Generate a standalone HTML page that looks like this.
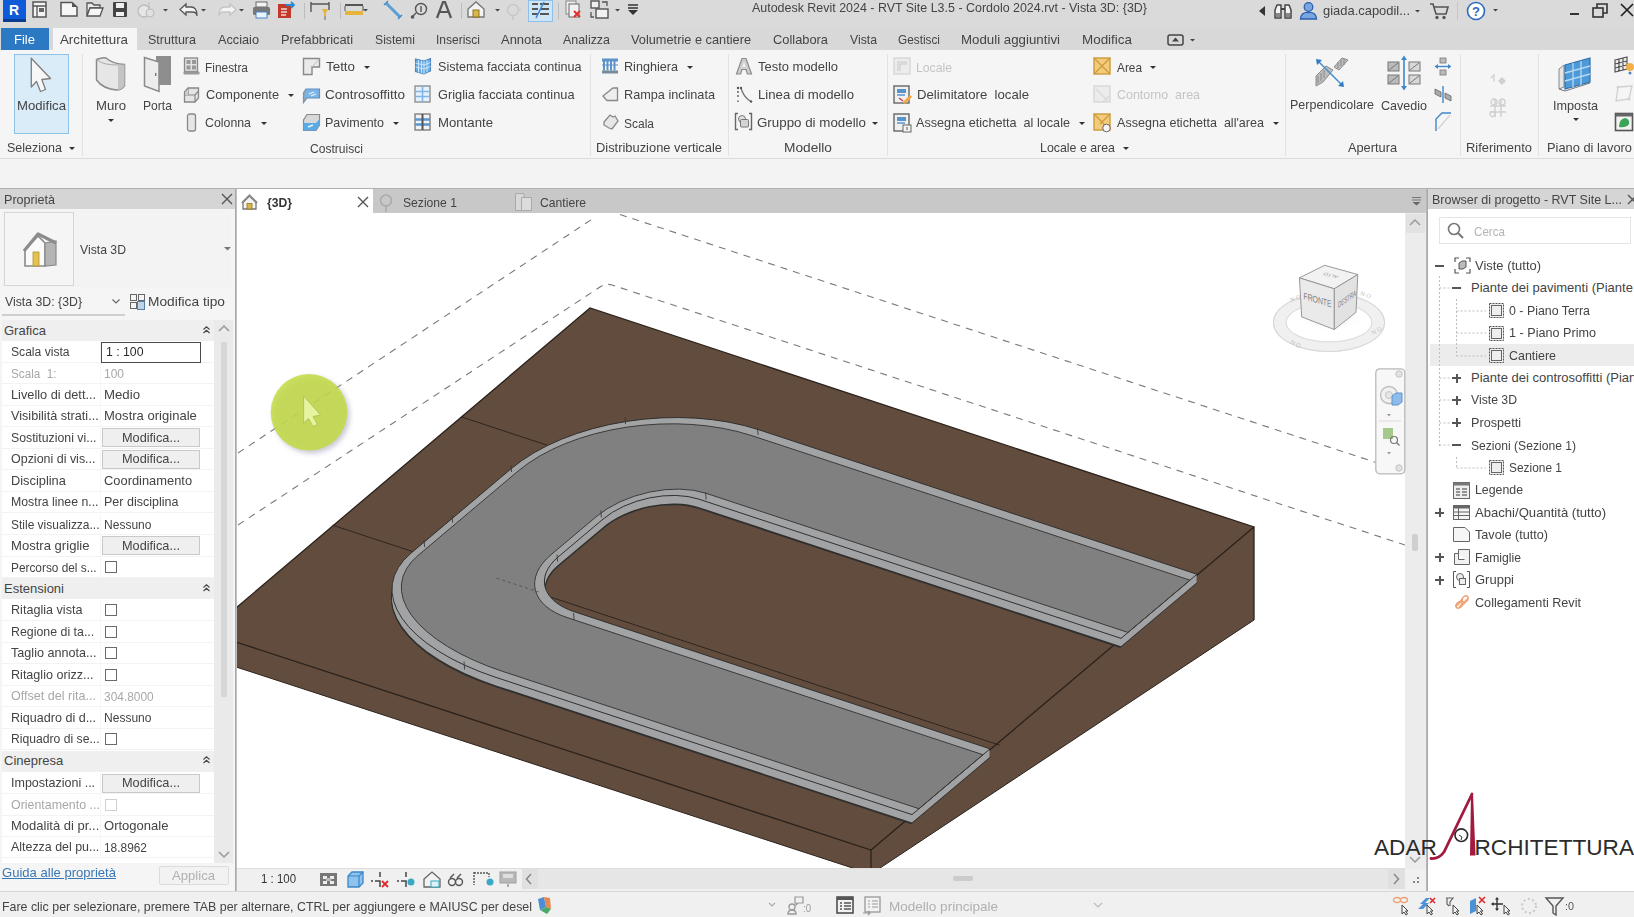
<!DOCTYPE html>
<html><head><meta charset="utf-8"><style>
html,body{margin:0;padding:0;width:1634px;height:917px;overflow:hidden;background:#f0f0f0;position:relative}
body{font-family:"Liberation Sans", sans-serif}
.t{position:absolute;white-space:pre;line-height:1.15;font-family:"Liberation Sans", sans-serif}
svg{overflow:visible}
</style></head><body>
<div style="position:absolute;left:0px;top:0px;width:1634px;height:28px;background:#dadada;"></div><div style="position:absolute;left:0px;top:28px;width:1634px;height:22px;background:#d8d8d8;"></div><div style="position:absolute;left:0px;top:50px;width:1634px;height:108px;background:#f5f5f5;"></div><div style="position:absolute;left:0px;top:158px;width:1634px;height:1px;background:#dcdcdc;"></div><div style="position:absolute;left:0px;top:159px;width:1634px;height:30px;background:#f3f3f3;"></div><div style="position:absolute;left:0px;top:188px;width:1634px;height:1px;background:#b0b0b0;"></div><div style="position:absolute;left:0px;top:891px;width:1634px;height:26px;background:#f0f0f0;"></div><div style="position:absolute;left:0px;top:891px;width:1634px;height:1px;background:#d6d6d6;"></div><div style="position:absolute;left:1px;top:28px;width:48px;height:22px;background:#2b79c2;"></div><div style="position:absolute;left:53px;top:28px;width:84px;height:22px;background:#f5f5f5;"></div><div style="position:absolute;left:82px;top:54px;width:1px;height:102px;background:#e2e2e2;"></div><div style="position:absolute;left:590px;top:54px;width:1px;height:102px;background:#e2e2e2;"></div><div style="position:absolute;left:728px;top:54px;width:1px;height:102px;background:#e2e2e2;"></div><div style="position:absolute;left:887px;top:54px;width:1px;height:102px;background:#e2e2e2;"></div><div style="position:absolute;left:1285px;top:54px;width:1px;height:102px;background:#e2e2e2;"></div><div style="position:absolute;left:1460px;top:54px;width:1px;height:102px;background:#e2e2e2;"></div><div style="position:absolute;left:1538px;top:54px;width:1px;height:102px;background:#e2e2e2;"></div><div style="position:absolute;left:14px;top:54px;width:55px;height:80px;background:#d9ecf8;border:1px solid #8dc3ea;box-sizing:border-box"></div><svg style="position:absolute;left:69px;top:146.5px" width="6" height="3"><polygon points="0,0 6,0 3,3" fill="#333"/></svg><svg style="position:absolute;left:364px;top:65.5px" width="6" height="3"><polygon points="0,0 6,0 3,3" fill="#333"/></svg><svg style="position:absolute;left:288px;top:93.5px" width="6" height="3"><polygon points="0,0 6,0 3,3" fill="#333"/></svg><svg style="position:absolute;left:261px;top:121.5px" width="6" height="3"><polygon points="0,0 6,0 3,3" fill="#333"/></svg><svg style="position:absolute;left:393px;top:121.5px" width="6" height="3"><polygon points="0,0 6,0 3,3" fill="#333"/></svg><svg style="position:absolute;left:687px;top:65.5px" width="6" height="3"><polygon points="0,0 6,0 3,3" fill="#333"/></svg><svg style="position:absolute;left:872px;top:121.5px" width="6" height="3"><polygon points="0,0 6,0 3,3" fill="#333"/></svg><svg style="position:absolute;left:1079px;top:121.5px" width="6" height="3"><polygon points="0,0 6,0 3,3" fill="#333"/></svg><svg style="position:absolute;left:1150px;top:65.5px" width="6" height="3"><polygon points="0,0 6,0 3,3" fill="#333"/></svg><svg style="position:absolute;left:1273px;top:121.5px" width="6" height="3"><polygon points="0,0 6,0 3,3" fill="#333"/></svg><svg style="position:absolute;left:1123px;top:146.5px" width="6" height="3"><polygon points="0,0 6,0 3,3" fill="#333"/></svg><svg style="position:absolute;left:108px;top:118.5px" width="6" height="3"><polygon points="0,0 6,0 3,3" fill="#333"/></svg><svg style="position:absolute;left:1573px;top:117.5px" width="6" height="3"><polygon points="0,0 6,0 3,3" fill="#333"/></svg><svg style="position:absolute;left:1414.5px;top:9.75px" width="5.0" height="2.5"><polygon points="0,0 5.0,0 2.5,2.5" fill="#444"/></svg><svg style="position:absolute;left:1492.5px;top:8.75px" width="5.0" height="2.5"><polygon points="0,0 5.0,0 2.5,2.5" fill="#444"/></svg><svg style="position:absolute;left:1189.5px;top:38.75px" width="5.0" height="2.5"><polygon points="0,0 5.0,0 2.5,2.5" fill="#444"/></svg><div style="position:absolute;left:0px;top:189px;width:236px;height:702px;background:#f5f5f5;"></div><div style="position:absolute;left:0px;top:189px;width:236px;height:20px;background:#d5d5d5;"></div><div style="position:absolute;left:235px;top:189px;width:1px;height:702px;background:#a9a9a9;"></div><svg style="position:absolute;left:221px;top:193px;" width="12" height="12" viewBox="0 0 12 12"><path d="M1,1 L11,11 M11,1 L1,11" stroke="#555" stroke-width="1.4"/></svg><div style="position:absolute;left:2px;top:210px;width:229px;height:77px;background:#f3f3f3;"></div><div style="position:absolute;left:4px;top:212px;width:70px;height:74px;background:#f5f5f5;border:1px solid #d6d6d6;box-sizing:border-box"></div><svg style="position:absolute;left:223.5px;top:247.25px" width="7.0" height="3.5"><polygon points="0,0 7.0,0 3.5,3.5" fill="#777"/></svg><svg style="position:absolute;left:21px;top:229px;" width="38" height="40" viewBox="0 0 38 40"><path d="M4,21 L17,7 L24,14 V37 H4 Z" fill="#fafafa" stroke="#8a8a8a" stroke-width="1.6"/><path d="M24,14 L35,12 V36 L24,37 Z" fill="#b4b4b4" stroke="#8a8a8a" stroke-width="1.2"/><path d="M3,22 L17,5 L35,14" fill="none" stroke="#8c8c8c" stroke-width="3.2" stroke-linejoin="round"/><rect x="12" y="23" width="6" height="14" fill="#e3c24f" stroke="#b39530" stroke-width="0.8"/></svg><svg style="position:absolute;left:112px;top:299px;" width="8" height="5" viewBox="0 0 8 5"><path d="M0.5,0.5 L4,4 L7.5,0.5" fill="none" stroke="#666" stroke-width="1.2"/></svg><div style="position:absolute;left:2px;top:314px;width:123px;height:2px;background:#cfcfcf;"></div><svg style="position:absolute;left:130px;top:294px;" width="15" height="16" viewBox="0 0 15 16"><rect x="0.5" y="0.5" width="6" height="6" fill="none" stroke="#666"/><rect x="8.5" y="0.5" width="6" height="6" fill="none" stroke="#666"/><rect x="0.5" y="8.5" width="6" height="6" fill="none" stroke="#666"/><rect x="7.5" y="7.5" width="7" height="8" fill="#bcd3ea" stroke="#5a7ea8"/></svg><div style="position:absolute;left:2px;top:320px;width:212px;height:543px;background:#ffffff;"></div><div style="position:absolute;left:2px;top:320.0px;width:212px;height:21px;background:#efefef;"></div><svg style="position:absolute;left:203px;top:325.5px;" width="7" height="8" viewBox="0 0 7 8"><path d="M0.5,3.5 L3.5,0.8 L6.5,3.5 M0.5,7 L3.5,4.3 L6.5,7" fill="none" stroke="#444" stroke-width="1.1"/></svg><div style="position:absolute;left:2px;top:578.0px;width:212px;height:21px;background:#efefef;"></div><svg style="position:absolute;left:203px;top:583.5px;" width="7" height="8" viewBox="0 0 7 8"><path d="M0.5,3.5 L3.5,0.8 L6.5,3.5 M0.5,7 L3.5,4.3 L6.5,7" fill="none" stroke="#444" stroke-width="1.1"/></svg><div style="position:absolute;left:2px;top:750.5px;width:212px;height:21px;background:#efefef;"></div><svg style="position:absolute;left:203px;top:756px;" width="7" height="8" viewBox="0 0 7 8"><path d="M0.5,3.5 L3.5,0.8 L6.5,3.5 M0.5,7 L3.5,4.3 L6.5,7" fill="none" stroke="#444" stroke-width="1.1"/></svg><div style="position:absolute;left:2px;top:361.6px;width:212px;height:1px;background:#f3f3f3;"></div><div style="position:absolute;left:100px;top:341.1px;width:1px;height:21px;background:#f6f6f6;"></div><div style="position:absolute;left:101px;top:341.5px;width:100px;height:21px;background:#ffffff;border:1.5px solid #4a4a4a;box-sizing:border-box"></div><div style="position:absolute;left:2px;top:383px;width:212px;height:1px;background:#f3f3f3;"></div><div style="position:absolute;left:100px;top:362.5px;width:1px;height:21px;background:#f6f6f6;"></div><div style="position:absolute;left:2px;top:404.5px;width:212px;height:1px;background:#f3f3f3;"></div><div style="position:absolute;left:100px;top:384.0px;width:1px;height:21px;background:#f6f6f6;"></div><div style="position:absolute;left:2px;top:426px;width:212px;height:1px;background:#f3f3f3;"></div><div style="position:absolute;left:100px;top:405.5px;width:1px;height:21px;background:#f6f6f6;"></div><div style="position:absolute;left:2px;top:447.5px;width:212px;height:1px;background:#f3f3f3;"></div><div style="position:absolute;left:100px;top:427.0px;width:1px;height:21px;background:#f6f6f6;"></div><div style="position:absolute;left:102px;top:428.0px;width:98px;height:19px;background:#efefef;border:1px solid #c9c9c9;box-sizing:border-box"></div><div style="position:absolute;left:2px;top:469px;width:212px;height:1px;background:#f3f3f3;"></div><div style="position:absolute;left:100px;top:448.5px;width:1px;height:21px;background:#f6f6f6;"></div><div style="position:absolute;left:102px;top:449.5px;width:98px;height:19px;background:#efefef;border:1px solid #c9c9c9;box-sizing:border-box"></div><div style="position:absolute;left:2px;top:490.7px;width:212px;height:1px;background:#f3f3f3;"></div><div style="position:absolute;left:100px;top:470.2px;width:1px;height:21px;background:#f6f6f6;"></div><div style="position:absolute;left:2px;top:512px;width:212px;height:1px;background:#f3f3f3;"></div><div style="position:absolute;left:100px;top:491.5px;width:1px;height:21px;background:#f6f6f6;"></div><div style="position:absolute;left:2px;top:534px;width:212px;height:1px;background:#f3f3f3;"></div><div style="position:absolute;left:100px;top:513.5px;width:1px;height:21px;background:#f6f6f6;"></div><div style="position:absolute;left:2px;top:555.5px;width:212px;height:1px;background:#f3f3f3;"></div><div style="position:absolute;left:100px;top:535.0px;width:1px;height:21px;background:#f6f6f6;"></div><div style="position:absolute;left:102px;top:536.0px;width:98px;height:19px;background:#efefef;border:1px solid #c9c9c9;box-sizing:border-box"></div><div style="position:absolute;left:2px;top:577px;width:212px;height:1px;background:#f3f3f3;"></div><div style="position:absolute;left:100px;top:556.5px;width:1px;height:21px;background:#f6f6f6;"></div><div style="position:absolute;left:105px;top:561px;width:12px;height:12px;background:transparent;border:1px solid #6a6a6a;box-sizing:border-box"></div><div style="position:absolute;left:2px;top:620px;width:212px;height:1px;background:#f3f3f3;"></div><div style="position:absolute;left:100px;top:599.5px;width:1px;height:21px;background:#f6f6f6;"></div><div style="position:absolute;left:105px;top:604px;width:12px;height:12px;background:transparent;border:1px solid #6a6a6a;box-sizing:border-box"></div><div style="position:absolute;left:2px;top:641.5px;width:212px;height:1px;background:#f3f3f3;"></div><div style="position:absolute;left:100px;top:621.0px;width:1px;height:21px;background:#f6f6f6;"></div><div style="position:absolute;left:105px;top:625.5px;width:12px;height:12px;background:transparent;border:1px solid #6a6a6a;box-sizing:border-box"></div><div style="position:absolute;left:2px;top:663px;width:212px;height:1px;background:#f3f3f3;"></div><div style="position:absolute;left:100px;top:642.5px;width:1px;height:21px;background:#f6f6f6;"></div><div style="position:absolute;left:105px;top:647px;width:12px;height:12px;background:transparent;border:1px solid #6a6a6a;box-sizing:border-box"></div><div style="position:absolute;left:2px;top:684.5px;width:212px;height:1px;background:#f3f3f3;"></div><div style="position:absolute;left:100px;top:664.0px;width:1px;height:21px;background:#f6f6f6;"></div><div style="position:absolute;left:105px;top:668.5px;width:12px;height:12px;background:transparent;border:1px solid #6a6a6a;box-sizing:border-box"></div><div style="position:absolute;left:2px;top:706px;width:212px;height:1px;background:#f3f3f3;"></div><div style="position:absolute;left:100px;top:685.5px;width:1px;height:21px;background:#f6f6f6;"></div><div style="position:absolute;left:2px;top:727.5px;width:212px;height:1px;background:#f3f3f3;"></div><div style="position:absolute;left:100px;top:707.0px;width:1px;height:21px;background:#f6f6f6;"></div><div style="position:absolute;left:2px;top:749px;width:212px;height:1px;background:#f3f3f3;"></div><div style="position:absolute;left:100px;top:728.5px;width:1px;height:21px;background:#f6f6f6;"></div><div style="position:absolute;left:105px;top:733px;width:12px;height:12px;background:transparent;border:1px solid #6a6a6a;box-sizing:border-box"></div><div style="position:absolute;left:2px;top:793px;width:212px;height:1px;background:#f3f3f3;"></div><div style="position:absolute;left:100px;top:772.5px;width:1px;height:21px;background:#f6f6f6;"></div><div style="position:absolute;left:102px;top:773.5px;width:98px;height:19px;background:#efefef;border:1px solid #c9c9c9;box-sizing:border-box"></div><div style="position:absolute;left:2px;top:814.5px;width:212px;height:1px;background:#f3f3f3;"></div><div style="position:absolute;left:100px;top:794.0px;width:1px;height:21px;background:#f6f6f6;"></div><div style="position:absolute;left:105px;top:798.5px;width:12px;height:12px;background:transparent;border:1px solid #d0d0d0;box-sizing:border-box"></div><div style="position:absolute;left:2px;top:835.5px;width:212px;height:1px;background:#f3f3f3;"></div><div style="position:absolute;left:100px;top:815.0px;width:1px;height:21px;background:#f6f6f6;"></div><div style="position:absolute;left:2px;top:857px;width:212px;height:1px;background:#f3f3f3;"></div><div style="position:absolute;left:100px;top:836.5px;width:1px;height:21px;background:#f6f6f6;"></div><div style="position:absolute;left:214px;top:320px;width:19px;height:543px;background:#eaeaea;"></div><div style="position:absolute;left:221px;top:342px;width:6px;height:355px;background:#d7d7d7;"></div><svg style="position:absolute;left:218px;top:325px;" width="12" height="7" viewBox="0 0 12 7"><path d="M1,6 L6,1 L11,6" fill="none" stroke="#999" stroke-width="1.5"/></svg><svg style="position:absolute;left:218px;top:851px;" width="12" height="7" viewBox="0 0 12 7"><path d="M1,1 L6,6 L11,1" fill="none" stroke="#999" stroke-width="1.5"/></svg><div style="position:absolute;left:159px;top:866px;width:70px;height:19px;background:#f2f2f2;border:1px solid #dcdcdc;box-sizing:border-box;border-radius:2px"></div><div style="position:absolute;left:1427px;top:189px;width:207px;height:702px;background:#ffffff;"></div><div style="position:absolute;left:1427px;top:189px;width:1px;height:702px;background:#a9a9a9;"></div><div style="position:absolute;left:1428px;top:189px;width:206px;height:20px;background:#d5d5d5;"></div><svg style="position:absolute;left:1627px;top:194px;" width="10" height="11" viewBox="0 0 10 11"><path d="M1,1 L10,10 M10,1 L1,10" stroke="#555" stroke-width="1.4"/></svg><div style="position:absolute;left:1439px;top:217px;width:192px;height:27px;background:#ffffff;border:1px solid #e4e4e4;box-sizing:border-box"></div><svg style="position:absolute;left:1447px;top:222px;" width="18" height="18" viewBox="0 0 18 18"><circle cx="7" cy="7" r="5.5" fill="none" stroke="#777" stroke-width="1.6"/><path d="M11,11 L16,16" stroke="#777" stroke-width="2"/></svg><div style="position:absolute;left:1430px;top:344px;width:204px;height:22px;background:#ececec;"></div><div style="position:absolute;left:1435px;top:264.5px;width:9px;height:2px;background:#555;"></div><div style="position:absolute;left:1452px;top:287px;width:9px;height:2px;background:#555;"></div><div style="position:absolute;left:1452px;top:377px;width:9px;height:2px;background:#555;"></div><div style="position:absolute;left:1455.5px;top:373.5px;width:2px;height:9px;background:#555;"></div><div style="position:absolute;left:1452px;top:399px;width:9px;height:2px;background:#555;"></div><div style="position:absolute;left:1455.5px;top:395.5px;width:2px;height:9px;background:#555;"></div><div style="position:absolute;left:1452px;top:421.5px;width:9px;height:2px;background:#555;"></div><div style="position:absolute;left:1455.5px;top:418.0px;width:2px;height:9px;background:#555;"></div><div style="position:absolute;left:1452px;top:444px;width:9px;height:2px;background:#555;"></div><div style="position:absolute;left:1435px;top:511.5px;width:9px;height:2px;background:#555;"></div><div style="position:absolute;left:1438.5px;top:508.0px;width:2px;height:9px;background:#555;"></div><div style="position:absolute;left:1435px;top:556px;width:9px;height:2px;background:#555;"></div><div style="position:absolute;left:1438.5px;top:552.5px;width:2px;height:9px;background:#555;"></div><div style="position:absolute;left:1435px;top:579px;width:9px;height:2px;background:#555;"></div><div style="position:absolute;left:1438.5px;top:575.5px;width:2px;height:9px;background:#555;"></div><svg style="position:absolute;left:1430px;top:270px;" width="100" height="200" viewBox="0 0 100 200"><path d="M9.5,6 V176 M9.5,18 H20 M9.5,108 H20 M9.5,130 H20 M9.5,153 H20 M9.5,175 H20 M26.5,29 V86 M26.5,41 H56 M26.5,63 H56 M26.5,86 H56 M26.5,187 V198 M26.5,198 H56" fill="none" stroke="#bdbdbd" stroke-width="1" stroke-dasharray="2,2"/></svg><svg style="position:absolute;left:1488px;top:302.0px;" width="17" height="17" viewBox="0 0 17 17"><rect x="1.5" y="1.5" width="14" height="14" fill="#f0f0f0" stroke="#555" stroke-width="1" stroke-dasharray="2,1"/><rect x="3.5" y="3.5" width="10" height="10" fill="#eee" stroke="#666" stroke-width="1"/></svg><svg style="position:absolute;left:1488px;top:324.5px;" width="17" height="17" viewBox="0 0 17 17"><rect x="1.5" y="1.5" width="14" height="14" fill="#f0f0f0" stroke="#555" stroke-width="1" stroke-dasharray="2,1"/><rect x="3.5" y="3.5" width="10" height="10" fill="#eee" stroke="#666" stroke-width="1"/></svg><svg style="position:absolute;left:1488px;top:347.0px;" width="17" height="17" viewBox="0 0 17 17"><rect x="1.5" y="1.5" width="14" height="14" fill="#f0f0f0" stroke="#555" stroke-width="1" stroke-dasharray="2,1"/><rect x="3.5" y="3.5" width="10" height="10" fill="#eee" stroke="#666" stroke-width="1"/></svg><svg style="position:absolute;left:1488px;top:459.0px;" width="17" height="17" viewBox="0 0 17 17"><rect x="1.5" y="1.5" width="14" height="14" fill="#f0f0f0" stroke="#555" stroke-width="1" stroke-dasharray="2,1"/><rect x="3.5" y="3.5" width="10" height="10" fill="#eee" stroke="#666" stroke-width="1"/></svg><svg style="position:absolute;left:1454px;top:257px;" width="17" height="17" viewBox="0 0 17 17"><path d="M1,5 V1 H5 M12,1 H16 V5 M16,12 V16 H12 M5,16 H1 V12" fill="none" stroke="#555" stroke-width="1.2"/><path d="M5,6 L8,4 H12 V10 L9,12 H5 Z" fill="#bbb" stroke="#555"/></svg><svg style="position:absolute;left:1453px;top:482px;" width="17" height="17" viewBox="0 0 17 17"><rect x="0.5" y="0.5" width="16" height="16" fill="#eee" stroke="#666"/><rect x="0.5" y="0.5" width="16" height="3" fill="#777"/><path d="M3,7 H7 M9,7 H14 M3,10 H7 M9,10 H14 M3,13 H7 M9,13 H14" stroke="#777" stroke-width="1.3"/></svg><svg style="position:absolute;left:1453px;top:505px;" width="17" height="15" viewBox="0 0 17 15"><rect x="0.5" y="0.5" width="16" height="14" fill="#f4f4f4" stroke="#666"/><rect x="0.5" y="0.5" width="16" height="3" fill="#666"/><path d="M0.5,7 H16.5 M0.5,10.5 H16.5 M5.5,3 V14.5" stroke="#666"/></svg><svg style="position:absolute;left:1453px;top:527px;" width="17" height="15" viewBox="0 0 17 15"><path d="M0.5,0.5 H12 L16.5,5 V14.5 H0.5 Z" fill="#f6f6f6" stroke="#666"/></svg><svg style="position:absolute;left:1454px;top:549px;" width="16" height="16" viewBox="0 0 16 16"><path d="M0.5,15.5 V4.5 H4.5 V0.5 H15.5 V15.5 Z M4.5,4.5 V10.5 H10.5" fill="#f2f2f2" stroke="#666"/></svg><svg style="position:absolute;left:1453px;top:571px;" width="17" height="17" viewBox="0 0 17 17"><path d="M3,0.5 H0.5 V16.5 H3 M14,0.5 H16.5 V16.5 H14" fill="none" stroke="#555"/><circle cx="7" cy="6" r="3.5" fill="#eee" stroke="#666"/><rect x="6.5" y="7.5" width="6" height="6" fill="#eee" stroke="#666"/></svg><svg style="position:absolute;left:1454px;top:594px;" width="16" height="16" viewBox="0 0 16 16"><path d="M3,11 L8,6 M6,13 L13,6" stroke="#f0b48a" stroke-width="2.5" stroke-linecap="round"/><ellipse cx="5" cy="11" rx="3.5" ry="2.5" transform="rotate(-45 5 11)" fill="none" stroke="#eda073" stroke-width="1.5"/><ellipse cx="11" cy="5" rx="3.5" ry="2.5" transform="rotate(-45 11 5)" fill="none" stroke="#eda073" stroke-width="1.5"/></svg><div style="position:absolute;left:236px;top:189px;width:1191px;height:24px;background:#c8c8c8;"></div><div style="position:absolute;left:236px;top:189px;width:137px;height:24px;background:#ffffff;"></div><div style="position:absolute;left:236px;top:213px;width:1170px;height:656px;background:#ffffff;"></div><div style="position:absolute;left:236px;top:189px;width:1px;height:702px;background:#c0c0c0;"></div><svg style="position:absolute;left:241px;top:194px;" width="17" height="16" viewBox="0 0 17 16"><path d="M2,8 L8.5,2 L15,8 V15 H2 Z" fill="#f3f3f3" stroke="#777" stroke-width="1.3"/><path d="M1,9 L8.5,1.5 L16,9" fill="none" stroke="#888" stroke-width="2"/><rect x="6" y="9.5" width="5" height="5.5" fill="#d8b64a" stroke="#8f7520" stroke-width="0.8"/></svg><svg style="position:absolute;left:357px;top:196px;" width="12" height="12" viewBox="0 0 12 12"><path d="M1,1 L11,11 M11,1 L1,11" stroke="#555" stroke-width="1.4"/></svg><svg style="position:absolute;left:379px;top:193px;" width="14" height="20" viewBox="0 0 14 20"><circle cx="7" cy="7.5" r="5.5" fill="none" stroke="#aaa" stroke-width="1.5"/><path d="M7,13 V19" stroke="#aaa" stroke-width="1.5"/></svg><svg style="position:absolute;left:515px;top:193px;" width="17" height="18" viewBox="0 0 17 18"><path d="M0.5,0.5 H9 V17.5 H0.5 Z" fill="#d8d8d8" stroke="#aaa"/><path d="M6.5,4.5 H16.5 V17.5 H6.5 Z" fill="#dcdcdc" stroke="#aaa"/></svg><svg style="position:absolute;left:1411px;top:196px;" width="11" height="10" viewBox="0 0 11 10"><path d="M1,1.5 H10 M1,4 H10" stroke="#777" stroke-width="1.2"/><polygon points="1.5,6 9.5,6 5.5,9.5" fill="#666"/></svg><div style="position:absolute;left:1405px;top:213px;width:21px;height:656px;background:#ececec;"></div><div style="position:absolute;left:1406px;top:214px;width:19px;height:19px;background:#e2e2e2;"></div><svg style="position:absolute;left:1409px;top:219px;" width="12" height="7" viewBox="0 0 12 7"><path d="M1,6 L6,1 L11,6" fill="none" stroke="#9a9a9a" stroke-width="1.5"/></svg><div style="position:absolute;left:1412px;top:534px;width:6px;height:17px;background:#cfcfcf;border-radius:2px"></div><svg style="position:absolute;left:1409px;top:856px;" width="12" height="7" viewBox="0 0 12 7"><path d="M1,1 L6,6 L11,1" fill="none" stroke="#9a9a9a" stroke-width="1.5"/></svg><div style="position:absolute;left:1426px;top:189px;width:1px;height:702px;background:#b8b8b8;"></div><div style="position:absolute;left:237px;top:868px;width:1168px;height:22px;background:#f0f0f0;"></div><div style="position:absolute;left:237px;top:868px;width:1168px;height:1px;background:#dedede;"></div><div style="position:absolute;left:522px;top:869px;width:16px;height:20px;background:#e0e0e0;"></div><svg style="position:absolute;left:525px;top:873px;" width="8" height="12" viewBox="0 0 8 12"><path d="M6,1 L1.5,6 L6,11" fill="none" stroke="#888" stroke-width="1.5"/></svg><div style="position:absolute;left:538px;top:869px;width:850px;height:20px;background:#e6e6e6;"></div><div style="position:absolute;left:953px;top:876px;width:20px;height:5px;background:#cccccc;border-radius:2px"></div><div style="position:absolute;left:1388px;top:869px;width:17px;height:20px;background:#e0e0e0;"></div><svg style="position:absolute;left:1392px;top:873px;" width="8" height="12" viewBox="0 0 8 12"><path d="M2,1 L6.5,6 L2,11" fill="none" stroke="#888" stroke-width="1.5"/></svg><svg style="position:absolute;left:1412px;top:876px;" width="9" height="9" viewBox="0 0 9 9"><rect x="5" y="1" width="2" height="2" fill="#888"/><rect x="5" y="5" width="2" height="2" fill="#888"/><rect x="1" y="5" width="2" height="2" fill="#888"/></svg><svg style="position:absolute;left:0px;top:0px;" width="1634" height="917" viewBox="0 0 1634 917"><defs><clipPath id="vc"><rect x="237" y="213" width="1168" height="655"/></clipPath></defs><g clip-path="url(#vc)"><path d="M238,453 L596,216.5 M620,214.5 L1405,472" fill="none" stroke="#7a7a7a" stroke-width="1.1" stroke-dasharray="7,6"/><path d="M238,525 L600,287 Q606,283 612,285 L1405,545" fill="none" stroke="#7a7a7a" stroke-width="1.1" stroke-dasharray="7,6"/><polygon points="590,308 1254,527 1254,620 871,874 207,657.5 207,632.5" fill="#624c3d"/><path d="M207,632.5 L590,308 L1254,527 L871,850 Z M871,850 V874 M1254,527 V620" fill="none" stroke="#2b221c" stroke-width="1.3"/><path d="M207,657.5 L871,874 L1254,620" fill="none" stroke="#2b221c" stroke-width="1"/><path d="M0,129 H200 M0,257.5 H667" transform="matrix(1,0.3298,-1,0.8433,590,308)" fill="none" stroke="#2e2520" stroke-width="1" vector-effect="non-scaling-stroke"/><path d="M671,63.2 L233.0,63.2 A145.8,103.8 0 0 0 87.2,167.0 L87.2,267.0 A167.8,82.8 0 0 0 255.0,349.8 L671,349.8 L671,270.2 L255.0,270.2 A57.2,41.2 0 0 1 197.8,229.0 L197.8,184.0 A51.2,43.2 0 0 1 249.0,140.8 L671,140.8 Z" fill="#2f2f2f" transform="matrix(1,0.3298,-1,0.8433,590,308)"/><path d="M671,64 L233,64 A145,103 0 0 0 88,167 L88,267 A167,82 0 0 0 255,349 L671,349 L671,271 L255,271 A58,42 0 0 1 197,229 L197,184 A52,44 0 0 1 249,140 L671,140 Z" fill="#a2a3a5" transform="matrix(1,0.3298,-1,0.8433,590,307)"/><path d="M671,64 L233,64 A145,103 0 0 0 88,167 L88,267 A167,82 0 0 0 255,349 L671,349 L671,271 L255,271 A58,42 0 0 1 197,229 L197,184 A52,44 0 0 1 249,140 L671,140 Z" fill="#a2a3a5" transform="matrix(1,0.3298,-1,0.8433,590,306)"/><path d="M671,64 L233,64 A145,103 0 0 0 88,167 L88,267 A167,82 0 0 0 255,349 L671,349 L671,271 L255,271 A58,42 0 0 1 197,229 L197,184 A52,44 0 0 1 249,140 L671,140 Z" fill="#a2a3a5" transform="matrix(1,0.3298,-1,0.8433,590,305)"/><path d="M671,64 L233,64 A145,103 0 0 0 88,167 L88,267 A167,82 0 0 0 255,349 L671,349 L671,271 L255,271 A58,42 0 0 1 197,229 L197,184 A52,44 0 0 1 249,140 L671,140 Z" fill="#a2a3a5" transform="matrix(1,0.3298,-1,0.8433,590,304)"/><path d="M671,64 L233,64 A145,103 0 0 0 88,167 L88,267 A167,82 0 0 0 255,349 L671,349 L671,271 L255,271 A58,42 0 0 1 197,229 L197,184 A52,44 0 0 1 249,140 L671,140 Z" fill="#a2a3a5" transform="matrix(1,0.3298,-1,0.8433,590,303)"/><path d="M671,64 L233,64 A145,103 0 0 0 88,167 L88,267 A167,82 0 0 0 255,349 L671,349 L671,271 L255,271 A58,42 0 0 1 197,229 L197,184 A52,44 0 0 1 249,140 L671,140 Z" fill="#a2a3a5" transform="matrix(1,0.3298,-1,0.8433,590,302)"/><path d="M671,64 L233,64 A145,103 0 0 0 88,167 L88,267 A167,82 0 0 0 255,349 L671,349 L671,271 L255,271 A58,42 0 0 1 197,229 L197,184 A52,44 0 0 1 249,140 L671,140 Z" fill="#a2a3a5" transform="matrix(1,0.3298,-1,0.8433,590,301)"/><path d="M671,64 L233,64 A145,103 0 0 0 88,167 L88,267 A167,82 0 0 0 255,349 L671,349 L671,271 L255,271 A58,42 0 0 1 197,229 L197,184 A52,44 0 0 1 249,140 L671,140 Z" fill="#a2a3a5" transform="matrix(1,0.3298,-1,0.8433,590,300)"/><path d="M671,64 L233,64 A145,103 0 0 0 88,167 L88,267 A167,82 0 0 0 255,349 L671,349 L671,271 L255,271 A58,42 0 0 1 197,229 L197,184 A52,44 0 0 1 249,140 L671,140 Z" fill="#a2a3a5" transform="matrix(1,0.3298,-1,0.8433,590,299)"/><path d="M671,71 L233,71 A138,96 0 0 0 95,167 L95,267 A160,75 0 0 0 255,342 L671,342 L671,278 L255,278 A65,49 0 0 1 190,229 L190,184 A59,51 0 0 1 249,133 L671,133 Z" fill="#808080" transform="matrix(1,0.3298,-1,0.8433,590,299)"/><path d="M671,64 L233,64 A145,103 0 0 0 88,167 L88,267 A167,82 0 0 0 255,349 L671,349 L671,271 L255,271 A58,42 0 0 1 197,229 L197,184 A52,44 0 0 1 249,140 L671,140 Z" fill="none" stroke="#303030" stroke-width="1" transform="matrix(1,0.3298,-1,0.8433,590,299)" vector-effect="non-scaling-stroke"/><path d="M671,71 L233,71 A138,96 0 0 0 95,167 L95,267 A160,75 0 0 0 255,342 L671,342 L671,278 L255,278 A65,49 0 0 1 190,229 L190,184 A59,51 0 0 1 249,133 L671,133 Z" fill="none" stroke="#3a3a3a" stroke-width="1" transform="matrix(1,0.3298,-1,0.8433,590,299)" vector-effect="non-scaling-stroke"/><path d="M625,417.0 L625.6,424.0 M757.5,428.0 L758.1,435.0 M511,465.0 L511.6,472.0 M452,515.5 L452.6,522.5 M424,540.0 L424.6,547.0 M391.5,599.5 L392.1,605.5 M464,661.5 L464.6,669.5 M705.6,492.5 L706.2,499.5 M600.8,510.5 L601.4,517.5 M557,554.5 L557.6,561.5 M573.5,613.0 L574.1,620.0" stroke="#3a3a3a" stroke-width="0.9"/><path d="M163,256.5 H205" transform="matrix(1,0.3298,-1,0.8433,590,308)" fill="none" stroke="#555" stroke-width="1" stroke-dasharray="3,3" vector-effect="non-scaling-stroke"/><defs><filter id="sh" x="-30%" y="-30%" width="160%" height="160%"><feGaussianBlur stdDeviation="2.5"/></filter></defs><circle cx="311.5" cy="415" r="38.5" fill="#8e8aa8" opacity="0.45" filter="url(#sh)"/><circle cx="309" cy="412.3" r="38.3" fill="#c2da40" opacity="0.84"/><path d="M303.6,396 L303.6,423 L308.5,418.5 L313,426.5 L317.5,424.5 L313,416.5 L320.5,415 Z" fill="#e6f3a0" stroke="#a9bd4a" stroke-width="0.8" stroke-linejoin="round"/></g></svg><svg style="position:absolute;left:28px;top:56px;" width="26" height="38" viewBox="0 0 26 38"><path d="M3.3,2.3 V31 L8.5,25.5 L12.5,35.5 L17.5,33.5 L13.8,23.5 L22.5,22.5 Z" fill="#f7f7f7" stroke="#7d7d7d" stroke-width="1.3" stroke-linejoin="round"/></svg><svg style="position:absolute;left:95px;top:56px;" width="32" height="36" viewBox="0 0 32 36"><path d="M1.5,3.5 Q8,1 11,2 Q18,8 29.5,8.5 L29.5,30 Q26,34 22,34 Q8,33 1.5,24 Z" fill="#e6e6e6" stroke="#8a8a8a" stroke-width="1.5"/><path d="M23,9 V34 Q27,33 29.5,30 V8.5 Z" fill="#c4c4c4"/><path d="M1.5,3.5 Q6,7 11,8 Q17,9 23,9" fill="none" stroke="#aaa" stroke-width="1"/></svg><svg style="position:absolute;left:143px;top:55px;" width="29" height="38" viewBox="0 0 29 38"><rect x="13" y="1" width="15" height="29" fill="#8e8e8e"/><path d="M1.5,2.5 L16,7 V36.5 L1.5,31 Z" fill="#ececec" stroke="#8a8a8a" stroke-width="1.5"/><rect x="12" y="18" width="1.4" height="3" fill="#777"/></svg><svg style="position:absolute;left:183px;top:57px;" width="17" height="18" viewBox="0 0 17 18"><rect x="1.5" y="1" width="13" height="13.5" fill="#e2e2e2" stroke="#888" stroke-width="1.3"/><rect x="3.5" y="3" width="4" height="4" fill="#999"/><rect x="9" y="3" width="4" height="4" fill="#999"/><rect x="3.5" y="8.5" width="4" height="4" fill="#999"/><rect x="9" y="8.5" width="4" height="4" fill="#999"/><rect x="0.5" y="14.5" width="16" height="3" rx="1" fill="#999"/></svg><svg style="position:absolute;left:183px;top:86px;" width="17" height="17" viewBox="0 0 17 17"><path d="M1.5,6 L5,2 H15.5 V12 L12,16 H1.5 Z" fill="#e4e4e4" stroke="#888" stroke-width="1.3"/><path d="M5,2 V9 H1.5 M5,9 L12,9 V16 M12,9 L15.5,5" fill="none" stroke="#888" stroke-width="1.2"/><path d="M2,6 L5,3 V9 H2Z" fill="#c9c9c9"/></svg><svg style="position:absolute;left:186px;top:113px;" width="11" height="19" viewBox="0 0 11 19"><rect x="1.5" y="1" width="8" height="17" rx="2" fill="#e6e6e6" stroke="#888" stroke-width="1.3"/></svg><svg style="position:absolute;left:302px;top:57px;" width="19" height="19" viewBox="0 0 19 19"><path d="M1.5,1.5 H17.5 V10 H10 V17.5 H1.5 Z" fill="#eaeaea" stroke="#888" stroke-width="1.4"/><path d="M10,10 L17.5,1.5" stroke="#bbb" stroke-width="1"/></svg><svg style="position:absolute;left:302px;top:85px;" width="19" height="19" viewBox="0 0 19 19"><path d="M4,4 H17.5 V13 H5 L1.5,17.5 V8 Z" fill="#7bb3e3" stroke="#5e8fbf" stroke-width="1.2"/><path d="M4,4 L1.5,8 V17.5 L5,13 H1.5" fill="#9b9b9b"/><path d="M7,9 L12,7 M9,11 L14,9" stroke="#e8f3fc" stroke-width="1.3"/></svg><svg style="position:absolute;left:302px;top:113px;" width="19" height="19" viewBox="0 0 19 19"><path d="M5,1.5 H17.5 V12 L14,17.5 H1.5 V7 Z" fill="#d8d8d8" stroke="#8a8a8a" stroke-width="1.2"/><path d="M1.5,10 H14 L17.5,6 V12 L14,17.5 H1.5 Z" fill="#5aaae6"/><path d="M6,14 L11,12" stroke="#e8f3fc" stroke-width="1.5"/></svg><svg style="position:absolute;left:414px;top:57px;" width="18" height="18" viewBox="0 0 18 18"><path d="M1.5,2 L10,4 L16.5,1.5 V14 L10,17 L1.5,14.5 Z" fill="#6aaee6" stroke="#4a86bd" stroke-width="1.1"/><path d="M4.5,3 V15.5 M7.5,3.5 V16.2 M1.5,6 L10,8 M1.5,10 L10,12 M10,4 V17 M10,8 L16.5,5.5 M10,12 L16.5,9.5 M13,3 V15.5" stroke="#d4e8f8" stroke-width="0.9" fill="none"/></svg><svg style="position:absolute;left:414px;top:85px;" width="17" height="18" viewBox="0 0 17 18"><rect x="1" y="1" width="15" height="16" fill="#e6f1fb" stroke="#888" stroke-width="1.3"/><path d="M8.5,1 V17 M1,6.5 H16 M1,11.5 H16" stroke="#7fb6e6" stroke-width="1.6"/></svg><svg style="position:absolute;left:414px;top:113px;" width="17" height="18" viewBox="0 0 17 18"><rect x="1" y="1" width="15" height="16" fill="#f2f2f2" stroke="#777" stroke-width="1.3"/><path d="M1,6.5 H16 M1,11.5 H16" stroke="#5797d3" stroke-width="2.3"/><path d="M8.5,1 V17" stroke="#555" stroke-width="2"/></svg><svg style="position:absolute;left:601px;top:57px;" width="18" height="18" viewBox="0 0 18 18"><rect x="1" y="1.5" width="16" height="3" fill="#5c93c9"/><rect x="1" y="13.5" width="16" height="3" fill="#7b8a99"/><path d="M3,4 V13.5 M6.5,4 V13.5 M10,4 V13.5 M13.5,4 V13.5" stroke="#5c93c9" stroke-width="2"/><path d="M1,8 H17" stroke="#5c93c9" stroke-width="1"/></svg><svg style="position:absolute;left:602px;top:86px;" width="17" height="16" viewBox="0 0 17 16"><path d="M1,10 L11,2 H15.5 V14.5 H5 Z" fill="#eeeeee" stroke="#888" stroke-width="1.3"/></svg><svg style="position:absolute;left:602px;top:113px;" width="17" height="18" viewBox="0 0 17 18"><path d="M2,9 L8,2 L11,4 L13,3 L16,8 L10,16 L7,15 L2,12 Z" fill="#e6e6e6" stroke="#888" stroke-width="1.3"/></svg><svg style="position:absolute;left:735px;top:57px;" width="18" height="18" viewBox="0 0 18 18"><path d="M1.5,17 L7,1.5 H11 L16.5,17 H12.5 L11,12.5 H7 L5.5,17 Z" fill="#cfcfcf" stroke="#8a8a8a" stroke-width="1.2"/><path d="M7.5,10 L9,5 L10.5,10 Z" fill="#f5f5f5"/></svg><svg style="position:absolute;left:736px;top:86px;" width="17" height="17" viewBox="0 0 17 17"><path d="M2,1 V12 M2,14.5 V16" stroke="#666" stroke-width="1.5" stroke-dasharray="2,2"/><path d="M5,2 Q7,10 14,15" fill="none" stroke="#777" stroke-width="1.3"/><circle cx="2" cy="2" r="1.2" fill="#555"/><circle cx="5" cy="2" r="1.2" fill="#555"/><circle cx="15" cy="15.5" r="1.2" fill="#555"/></svg><svg style="position:absolute;left:734px;top:112px;" width="19" height="19" viewBox="0 0 19 19"><path d="M4,1.5 H1.5 V17.5 H4 M15,1.5 H17.5 V17.5 H15" fill="none" stroke="#666" stroke-width="1.4"/><circle cx="8" cy="7" r="3.5" fill="#e0e0e0" stroke="#777"/><rect x="6.5" y="7.5" width="8" height="7.5" rx="1" fill="#d4d4d4" stroke="#777"/></svg><svg style="position:absolute;left:893px;top:57px;" width="18" height="18" viewBox="0 0 18 18"><rect x="1" y="1" width="16" height="16" fill="#ececec" stroke="#d4d4d4" stroke-width="1.3"/><path d="M4,4 H14 V8 H8 V14 H4 Z" fill="#dadada"/></svg><svg style="position:absolute;left:893px;top:85px;" width="19" height="19" viewBox="0 0 19 19"><rect x="1" y="1" width="15" height="17" fill="#f0f0f0" stroke="#666" stroke-width="1.4"/><rect x="4" y="4" width="9" height="4" fill="#5893cc"/><path d="M4,10 H12" stroke="#5893cc" stroke-width="1.5"/><path d="M10,17 L17,10 L19,12 L12,19 Z" fill="#f2a540"/><path d="M6,13 L10,16" stroke="#d04040" stroke-width="1.5"/></svg><svg style="position:absolute;left:893px;top:113px;" width="19" height="19" viewBox="0 0 19 19"><rect x="1" y="1" width="15" height="17" fill="#f0f0f0" stroke="#666" stroke-width="1.4"/><rect x="4" y="4" width="9" height="4" fill="#5893cc"/><path d="M4,10 H12" stroke="#5893cc" stroke-width="1.5"/><rect x="10" y="12" width="8" height="7" fill="#f4f4f4" stroke="#666"/><path d="M14,14 V17" stroke="#555"/></svg><svg style="position:absolute;left:1093px;top:57px;" width="18" height="18" viewBox="0 0 18 18"><rect x="1" y="1" width="16" height="16" fill="#f2cc7a" stroke="#cd9b3c" stroke-width="1.4"/><path d="M1,1 L17,17 M17,1 L1,17" stroke="#cd9b3c" stroke-width="1.3"/></svg><svg style="position:absolute;left:1093px;top:85px;" width="18" height="19" viewBox="0 0 18 19"><rect x="1" y="1" width="16" height="16" fill="#ececec" stroke="#d6d6d6" stroke-width="1.3"/><path d="M3,4 L15,16 M10,17 L17,10" stroke="#d9d9d9" stroke-width="1.3"/></svg><svg style="position:absolute;left:1093px;top:113px;" width="19" height="19" viewBox="0 0 19 19"><rect x="1" y="1" width="16" height="16" fill="#f2cc7a" stroke="#cd9b3c" stroke-width="1.4"/><path d="M1,1 L17,17 M17,1 L7,11" stroke="#cd9b3c" stroke-width="1.3"/><circle cx="13.5" cy="15" r="3.8" fill="#f4f4f4" stroke="#666"/></svg><svg style="position:absolute;left:1314px;top:56px;" width="36" height="33" viewBox="0 0 36 33"><path d="M2,30 L2,20 L12,10 L19,14 L9,26 Z" fill="#bdbdbd" stroke="#8a8a8a"/><path d="M4,27 V20 M7,25 V17 M10,22 V14" stroke="#888"/><path d="M20,11 L28,2 L34,4 L25,14 Z" fill="#bdbdbd" stroke="#8a8a8a"/><path d="M24,6 V12 M27,4 V10 M30,3 V9" stroke="#888"/><path d="M4,5 L28,29" stroke="#4a8ed0" stroke-width="1.6"/><path d="M2,3 L8,4 L3,9 Z M30,31 L24,30 L29,25 Z" fill="#2f7cc4"/></svg><svg style="position:absolute;left:1387px;top:55px;" width="34" height="36" viewBox="0 0 34 36"><rect x="1" y="7" width="11" height="9" fill="#bbb" stroke="#777"/><rect x="1" y="20" width="11" height="9" fill="#bbb" stroke="#777"/><rect x="22" y="7" width="11" height="9" fill="#d8d8d8" stroke="#777"/><rect x="22" y="20" width="11" height="9" fill="#d8d8d8" stroke="#777"/><path d="M2,15 L11,8 M2,28 L11,21 M23,15 L32,8 M23,28 L32,21" stroke="#777"/><path d="M17,3 V33" stroke="#3f86cb" stroke-width="1.6"/><path d="M14,5 L17,0.5 L20,5 Z M14,31 L17,35.5 L20,31 Z" fill="#3f86cb"/></svg><svg style="position:absolute;left:1434px;top:57px;" width="18" height="19" viewBox="0 0 18 19"><path d="M1,9.5 H17" stroke="#3f86cb" stroke-width="1.4"/><path d="M1,9.5 L4,7 V12 Z M17,9.5 L14,7 V12Z" fill="#3f86cb"/><rect x="6" y="1" width="6" height="5" fill="#bbb" stroke="#777" stroke-width="0.8"/><rect x="6" y="13" width="6" height="5" fill="#bbb" stroke="#777" stroke-width="0.8"/></svg><svg style="position:absolute;left:1434px;top:85px;" width="18" height="19" viewBox="0 0 18 19"><path d="M9,1 V18" stroke="#3f86cb" stroke-width="1.4"/><path d="M1,4 L7,7 V12 L1,9 Z" fill="#aaa" stroke="#666" stroke-width="0.8"/><path d="M11,8 L17,11 V16 L11,13 Z" fill="#aaa" stroke="#666" stroke-width="0.8"/></svg><svg style="position:absolute;left:1434px;top:112px;" width="18" height="20" viewBox="0 0 18 20"><path d="M2,19 V7 L8,1 H17" fill="none" stroke="#3f86cb" stroke-width="1.4"/><path d="M3,17 L15,3 H17 L5,17 Z" fill="#d6d6d6"/></svg><svg style="position:absolute;left:1488px;top:72px;" width="20" height="16" viewBox="0 0 20 16"><path d="M3,6 L6,3 V10" fill="none" stroke="#cfcfcf" stroke-width="1.2"/><path d="M10,9 L14,5 L18,9 L14,13 Z" fill="#d0d0d0"/></svg><svg style="position:absolute;left:1489px;top:98px;" width="18" height="20" viewBox="0 0 18 20"><path d="M1,8 H17 M1,14 H17 M6,2 V19 M12,2 V19" stroke="#d0d0d0" stroke-width="1.5"/><circle cx="5" cy="4" r="3" fill="none" stroke="#d0d0d0" stroke-width="1.3"/><circle cx="13" cy="4" r="3" fill="none" stroke="#d0d0d0" stroke-width="1.3"/><circle cx="3.5" cy="16" r="2.5" fill="none" stroke="#d0d0d0" stroke-width="1.3"/></svg><svg style="position:absolute;left:1558px;top:55px;" width="34" height="37" viewBox="0 0 34 37"><path d="M1,14 L6,10 V32 L1,34 Z" fill="#e6e6e6" stroke="#888"/><path d="M7,10 L32,3 V27 L7,34 Z" fill="#4d9ad8" stroke="#2f6ea8" stroke-width="1.2"/><path d="M7,18 L32,11 M7,26 L32,19 M15,8 V32 M23,6 V30" stroke="#b6d8f3" stroke-width="1.3"/><path d="M1,34 L7,36 L32,28" fill="none" stroke="#777"/></svg><svg style="position:absolute;left:1614px;top:56px;" width="20" height="20" viewBox="0 0 20 20"><path d="M1,4 L13,1 V13 L1,16 Z M1,8 L13,5 M1,12 L13,9 M5,3 V15 M9,2 V14" fill="#eee" stroke="#555" stroke-width="1.2"/><circle cx="16" cy="11" r="4" fill="#f2b04a"/><circle cx="16" cy="17" r="1.5" fill="#4a84c4"/></svg><svg style="position:absolute;left:1614px;top:85px;" width="20" height="20" viewBox="0 0 20 20"><path d="M4,2 L18,1 L15,14 L2,16 Z" fill="none" stroke="#d0d0d0" stroke-width="1.3"/><circle cx="4" cy="2" r="1.5" fill="#d0d0d0"/><circle cx="15" cy="14" r="1.5" fill="#d0d0d0"/></svg><svg style="position:absolute;left:1614px;top:112px;" width="20" height="20" viewBox="0 0 20 20"><rect x="1.5" y="1.5" width="17" height="17" fill="#f2f2f2" stroke="#555" stroke-width="1.6"/><rect x="1.5" y="1.5" width="17" height="3" fill="#666"/><path d="M5,15 Q5,7 11,6 Q16,7 15,12 Q12,16 5,15 Z" fill="#3aa655"/></svg><svg style="position:absolute;left:2px;top:0px;" width="25" height="22" viewBox="0 0 25 22"><rect x="1" y="0" width="23" height="21" fill="#0d5bd8"/><rect x="1" y="19" width="23" height="3" fill="#0a3c90"/><text x="7" y="15" font-family="Liberation Sans" font-weight="bold" font-size="14" fill="#fff">R</text></svg><svg style="position:absolute;left:32px;top:1px;" width="15" height="17" viewBox="0 0 15 17"><rect x="1" y="1" width="13" height="15" fill="#f3f3f3" stroke="#555" stroke-width="1.5"/><path d="M1,5 H14 M5,5 V16" stroke="#555" stroke-width="1.3"/><rect x="7" y="7" width="5" height="4" fill="#666"/></svg><svg style="position:absolute;left:60px;top:1px;" width="18" height="16" viewBox="0 0 18 16"><path d="M1,1.5 H12 L17,6 V15 H1 Z" fill="#f6f6f6" stroke="#555" stroke-width="1.5"/><path d="M12,1.5 V6 H17" fill="#555"/></svg><svg style="position:absolute;left:86px;top:1px;" width="18" height="16" viewBox="0 0 18 16"><path d="M1,2 H6 L8,4 H14 V7 H4 L1,15 Z" fill="#eaeaea" stroke="#555" stroke-width="1.3"/><path d="M4,7 H17 L14,15 H1 Z" fill="#f6f6f6" stroke="#555" stroke-width="1.3"/></svg><svg style="position:absolute;left:112px;top:1px;" width="16" height="17" viewBox="0 0 16 17"><rect x="1" y="1" width="14" height="15" rx="1" fill="#444"/><rect x="4" y="2" width="8" height="5" fill="#f0f0f0"/><rect x="4" y="11" width="8" height="4" fill="#f0f0f0"/></svg><svg style="position:absolute;left:137px;top:1px;" width="18" height="18" viewBox="0 0 18 18"><circle cx="7" cy="10" r="6" fill="#e6e6e6" stroke="#bbb" stroke-width="1.3"/><circle cx="13" cy="12" r="4" fill="#e0e0e0" stroke="#bbb"/><path d="M12,1 V8" stroke="#bbb"/></svg><svg style="position:absolute;left:179px;top:3px;" width="20" height="14" viewBox="0 0 20 14"><path d="M7,1 L1,6.5 L7,12 V9 H13 Q18,9 18,13 Q18,4 12,4 H7 Z" fill="#f4f4f4" stroke="#555" stroke-width="1.3"/></svg><svg style="position:absolute;left:218px;top:3px;" width="19" height="14" viewBox="0 0 19 14"><path d="M12,1 L18,6.5 L12,12 V9 H6 Q1,9 1,13 Q1,4 7,4 H12 Z" fill="#f4f4f4" stroke="#c4c4c4" stroke-width="1.3"/></svg><svg style="position:absolute;left:252px;top:1px;" width="19" height="18" viewBox="0 0 19 18"><rect x="4" y="1" width="11" height="5" fill="#f3f3f3" stroke="#666"/><rect x="1" y="6" width="17" height="8" rx="1.5" fill="#777"/><rect x="4" y="11" width="11" height="6" fill="#eaf3fb" stroke="#4a86c0"/></svg><svg style="position:absolute;left:277px;top:1px;" width="18" height="18" viewBox="0 0 18 18"><rect x="1" y="3" width="13" height="14" fill="#c0392b"/><path d="M4,8 H10 M4,11 H10 M4,14 H9" stroke="#f6d6d2" stroke-width="1.3"/><path d="M9,4 H17 M14,1 L17,4 L14,7" fill="none" stroke="#2b8ad6" stroke-width="1.8"/></svg><div style="position:absolute;left:304px;top:3px;width:1px;height:16px;background:#bdbdbd;"></div><svg style="position:absolute;left:310px;top:0px;" width="20" height="20" viewBox="0 0 20 20"><path d="M1,2 V12 M19,2 V10 M1,4 H19" stroke="#555" stroke-width="1.4"/><path d="M12,9 H18 L16,13 V16 H14 V13 Z" fill="#e4b43c"/><path d="M15,16 V20" stroke="#666"/></svg><div style="position:absolute;left:340px;top:3px;width:1px;height:16px;background:#bdbdbd;"></div><svg style="position:absolute;left:344px;top:3px;" width="20" height="13" viewBox="0 0 20 13"><rect x="1" y="1" width="18" height="2" fill="#555"/><rect x="1" y="8" width="18" height="4" fill="#e4b43c"/><path d="M1,3 V8 M19,3 V8" stroke="#555"/></svg><svg style="position:absolute;left:383px;top:0px;" width="20" height="20" viewBox="0 0 20 20"><path d="M3,3 L17,17" stroke="#5a9fd8" stroke-width="3"/><path d="M1,5 L5,1 M15,19 L19,15" stroke="#4a86c0" stroke-width="1.4"/></svg><svg style="position:absolute;left:410px;top:2px;" width="18" height="17" viewBox="0 0 18 17"><circle cx="11" cy="7" r="5.5" fill="none" stroke="#555" stroke-width="1.4"/><path d="M11,4 V10" stroke="#555" stroke-width="1.4"/><path d="M6,11 L2,15" stroke="#555" stroke-width="1.4"/><circle cx="2.5" cy="15" r="1.8" fill="#555"/></svg><svg style="position:absolute;left:436px;top:1px;" width="16" height="18" viewBox="0 0 16 18"><path d="M1,17 L7,1 H9 L15,17 M4,11 H12" fill="none" stroke="#555" stroke-width="2.2"/></svg><div style="position:absolute;left:461px;top:3px;width:1px;height:16px;background:#bdbdbd;"></div><svg style="position:absolute;left:467px;top:1px;" width="18" height="17" viewBox="0 0 18 17"><path d="M1,8 L9,1 L17,8 V16 H1 Z" fill="#f3f3f3" stroke="#777" stroke-width="1.4"/><rect x="6" y="9" width="6" height="7" fill="#d8b64a" stroke="#8f7520"/></svg><svg style="position:absolute;left:505px;top:2px;" width="16" height="18" viewBox="0 0 16 18"><circle cx="8" cy="8" r="5.5" fill="none" stroke="#c8c8c8" stroke-width="1.5"/><path d="M8,13 V18 M13,8 H16" stroke="#c8c8c8" stroke-width="1.5"/></svg><svg style="position:absolute;left:528px;top:0px;" width="25" height="22" viewBox="0 0 25 22"><rect x="0.5" y="0.5" width="24" height="21" fill="#cde5f7" stroke="#8ec1ea"/><path d="M4,4 H10 M4,9 H10 M4,14 H10 M12,4 H21 M12,9 H21 M12,14 H21" stroke="#555" stroke-width="2"/><path d="M8,18 L16,2" stroke="#3b8ad6" stroke-width="1.5"/></svg><div style="position:absolute;left:558px;top:3px;width:1px;height:16px;background:#bdbdbd;"></div><svg style="position:absolute;left:565px;top:0px;" width="19" height="20" viewBox="0 0 19 20"><rect x="1" y="1" width="10" height="13" fill="#eee" stroke="#888"/><rect x="4" y="4" width="10" height="13" fill="#f2f2f2" stroke="#666"/><path d="M9,11 L15,17 M15,11 L9,17" stroke="#e0302c" stroke-width="2"/></svg><svg style="position:absolute;left:590px;top:0px;" width="19" height="20" viewBox="0 0 19 20"><rect x="1" y="1" width="8" height="7" fill="#eee" stroke="#555" stroke-width="1.4"/><rect x="6" y="9" width="12" height="9" fill="#f2f2f2" stroke="#555" stroke-width="1.4"/><path d="M12,2 H17 V6 M1,12 V17 H4" fill="none" stroke="#555" stroke-width="1.3"/></svg><svg style="position:absolute;left:614.5px;top:8.75px" width="5.0" height="2.5"><polygon points="0,0 5.0,0 2.5,2.5" fill="#444"/></svg><svg style="position:absolute;left:627px;top:3px;" width="12" height="13" viewBox="0 0 12 13"><path d="M1,2 H11 M1,5 H11" stroke="#333" stroke-width="1.5"/><polygon points="1,7 11,7 6,12" fill="#333"/></svg><svg style="position:absolute;left:162.5px;top:8.75px" width="5.0" height="2.5"><polygon points="0,0 5.0,0 2.5,2.5" fill="#444"/></svg><svg style="position:absolute;left:200.5px;top:8.75px" width="5.0" height="2.5"><polygon points="0,0 5.0,0 2.5,2.5" fill="#444"/></svg><svg style="position:absolute;left:238.5px;top:8.75px" width="5.0" height="2.5"><polygon points="0,0 5.0,0 2.5,2.5" fill="#444"/></svg><svg style="position:absolute;left:494.5px;top:8.75px" width="5.0" height="2.5"><polygon points="0,0 5.0,0 2.5,2.5" fill="#444"/></svg><svg style="position:absolute;left:362.5px;top:8.75px" width="5.0" height="2.5"><polygon points="0,0 5.0,0 2.5,2.5" fill="#444"/></svg><svg style="position:absolute;left:1258px;top:5px;" width="8" height="12" viewBox="0 0 8 12"><polygon points="7,1 7,11 1,6" fill="#333"/></svg><svg style="position:absolute;left:1273px;top:2px;" width="20" height="18" viewBox="0 0 20 18"><path d="M2,16 V8 L4,3 H8 V16 Z M12,16 V3 H16 L18,8 V16 Z" fill="#f4f4f4" stroke="#444" stroke-width="1.5" stroke-linejoin="round"/><path d="M8,7 H12" stroke="#444" stroke-width="2"/><rect x="3" y="11" width="4" height="4" fill="#888"/><rect x="13" y="11" width="4" height="4" fill="#888"/></svg><svg style="position:absolute;left:1299px;top:1px;" width="19" height="19" viewBox="0 0 19 19"><circle cx="9.5" cy="6" r="4.3" fill="#7aa6e0" stroke="#2a5fb0" stroke-width="1.3"/><path d="M1.5,18 Q2,11 9.5,11.5 Q17,11 17.5,18 Z" fill="#7aa6e0" stroke="#2a5fb0" stroke-width="1.3"/></svg><svg style="position:absolute;left:1429px;top:2px;" width="20" height="18" viewBox="0 0 20 18"><path d="M1,2 H4 L7,12 H17 L19,5 H5" fill="none" stroke="#555" stroke-width="1.6"/><circle cx="8" cy="15.5" r="1.7" fill="#555"/><circle cx="15" cy="15.5" r="1.7" fill="#555"/></svg><div style="position:absolute;left:1457px;top:2px;width:1px;height:18px;background:#c6c6c6;"></div><svg style="position:absolute;left:1466px;top:1px;" width="20" height="20" viewBox="0 0 20 20"><circle cx="10" cy="10" r="8.5" fill="#fff" stroke="#2f6bc0" stroke-width="1.6"/><text x="6" y="15" font-family="Liberation Sans" font-weight="bold" font-size="13" fill="#2f6bc0">?</text></svg><div style="position:absolute;left:1570px;top:13px;width:9px;height:2px;background:#333;"></div><svg style="position:absolute;left:1592px;top:3px;" width="16" height="15" viewBox="0 0 16 15"><rect x="1" y="5" width="10" height="9" fill="none" stroke="#333" stroke-width="1.6"/><path d="M5,5 V1 H15 V10 H11" fill="none" stroke="#333" stroke-width="1.6"/></svg><svg style="position:absolute;left:1620px;top:3px;" width="14" height="14" viewBox="0 0 14 14"><path d="M1,1 L13,13 M13,1 L1,13" stroke="#222" stroke-width="1.7"/></svg><svg style="position:absolute;left:1167px;top:34px;" width="17" height="12" viewBox="0 0 17 12"><rect x="1" y="1" width="15" height="10" rx="2" fill="none" stroke="#444" stroke-width="1.5"/><polygon points="5,7.5 12,7.5 8.5,3.5" fill="#444"/></svg><svg style="position:absolute;left:0px;top:0px;pointer-events:none" width="1634" height="917" viewBox="0 0 1634 917"><defs><radialGradient id="vcs" cx="0.5" cy="0.5" r="0.5"><stop offset="0" stop-color="#d8d8d8"/><stop offset="1" stop-color="#ffffff" stop-opacity="0"/></radialGradient></defs><ellipse cx="1329" cy="322.5" rx="55.5" ry="29" fill="none" stroke="#dedede" stroke-width="1.2"/><ellipse cx="1329" cy="322.5" rx="43" ry="20" fill="none" stroke="#e2e2e2" stroke-width="1.2"/><ellipse cx="1329" cy="322" rx="49" ry="24.5" fill="none" stroke="#f0f0f0" stroke-width="11"/><ellipse cx="1329" cy="322.5" rx="55.5" ry="29" fill="none" stroke="#d6d6d6" stroke-width="1"/><ellipse cx="1329" cy="322.5" rx="43" ry="19.5" fill="none" stroke="#dcdcdc" stroke-width="1"/><ellipse cx="1330" cy="318" rx="32" ry="14" fill="url(#vcs)"/><polygon points="1299.4,277.9 1324.6,265.3 1357.8,274.5 1334.3,288.8" fill="#f2f2f2" stroke="#8f8f8f" stroke-width="0.9"/><polygon points="1299.4,277.9 1334.3,288.8 1334.3,329.5 1301.7,316.9" fill="#eaeaea" stroke="#8f8f8f" stroke-width="0.9"/><polygon points="1334.3,288.8 1357.8,274.5 1356,312.3 1334.3,329.5" fill="#e2e2e2" stroke="#8f8f8f" stroke-width="0.9"/><text x="0" y="0" font-family="Liberation Sans" font-size="9" fill="#7a7a7a" transform="matrix(1,0.3,0,1.05,1303.5,299)" textLength="28" lengthAdjust="spacingAndGlyphs">FRONTE</text><text x="0" y="0" font-family="Liberation Sans" font-size="8" fill="#7a7a7a" transform="matrix(0.9,-0.62,0,1.05,1338,308)" textLength="20" lengthAdjust="spacingAndGlyphs">DESTRA</text><text x="0" y="0" font-family="Liberation Sans" font-size="7" fill="#9a9a9a" transform="matrix(-1,-0.25,0.5,-0.5,1339,276)" textLength="14" lengthAdjust="spacingAndGlyphs">ALTO</text><text x="1291" y="302" font-family="Liberation Sans" font-size="6" fill="#c4c4c4" transform="rotate(-20 1291 302)">N O</text><text x="1290" y="343" font-family="Liberation Sans" font-size="6" fill="#c4c4c4" transform="rotate(30 1290 343)">N O</text><text x="1373" y="335" font-family="Liberation Sans" font-size="6" fill="#c4c4c4" transform="rotate(-30 1373 335)">N O</text><text x="1360" y="295" font-family="Liberation Sans" font-size="6" fill="#c4c4c4" transform="rotate(20 1360 295)">N O</text></svg><svg style="position:absolute;left:1375px;top:368px;" width="31" height="107" viewBox="0 0 31 107"><rect x="0.8" y="0.8" width="29" height="105" rx="4" fill="#f7f7f7" stroke="#b9b9b9" stroke-width="1.3"/><circle cx="24" cy="6" r="3.2" fill="#e2e2e2" stroke="#c4c4c4"/><circle cx="24" cy="100" r="3.2" fill="#e2e2e2" stroke="#c4c4c4"/><circle cx="14" cy="27" r="8.5" fill="#f0f0f0" stroke="#bdbdbd" stroke-width="1.3"/><circle cx="14" cy="27" r="3.5" fill="#e6e6e6" stroke="#c6c6c6"/><path d="M17,28 L21,25 H27 V34 L23,37 H17 Z" fill="#8dbcec" stroke="#5e93cc"/><polygon points="12,46 16,46 14,48.5" fill="#999"/><path d="M4,53 H26" stroke="#e3d6e3" stroke-width="1"/><rect x="8" y="60" width="10" height="11" fill="#a5c98a"/><circle cx="19" cy="72" r="3.5" fill="none" stroke="#777" stroke-width="1.2"/><path d="M21.5,74.5 L24.5,77.5" stroke="#777" stroke-width="1.3"/><polygon points="12,84 16,84 14,86.5" fill="#999"/></svg><svg style="position:absolute;left:1370px;top:790px;" width="264" height="72" viewBox="0 0 264 72"><text x="4" y="65.3" font-family="Liberation Sans" font-size="22" fill="#2b2b2b" textLength="63" lengthAdjust="spacingAndGlyphs">ADAR</text><text x="104.5" y="65.3" font-family="Liberation Sans" font-size="22" fill="#2b2b2b" textLength="159.5" lengthAdjust="spacingAndGlyphs">RCHITETTURA</text><path d="M61,68.5 Q69,69 74,62 L102,4" fill="none" stroke="#a3193f" stroke-width="2.8" stroke-linecap="round"/><path d="M101,3 L103,3 L105.5,65.5 L100,65.5 Z" fill="#a3193f"/><circle cx="91.3" cy="45.2" r="6.3" fill="none" stroke="#2a2a2a" stroke-width="1.6"/><path d="M89,45 L92,47 L91,50" fill="none" stroke="#333" stroke-width="1"/></svg><svg style="position:absolute;left:319px;top:871px;" width="200" height="17" viewBox="0 0 200 17"><rect x="1" y="2" width="17" height="13" fill="#777"/><rect x="4" y="5" width="4" height="3" fill="#eee"/><rect x="11" y="5" width="4" height="3" fill="#eee"/><rect x="4" y="10" width="4" height="3" fill="#eee"/><rect x="11" y="10" width="4" height="3" fill="#eee"/><rect x="7" y="7" width="5" height="3" fill="#bbb"/><path d="M29,5 L33,1 H44 V12 L40,16 H29 Z" fill="#8fc3ee" stroke="#3d86c8" stroke-width="1.3"/><path d="M29,5 H40 V16 M40,5 L44,1" fill="none" stroke="#3d86c8" stroke-width="1.2"/><path d="M52,10 H54 M56,10 H61 V16 M61,1 V6" fill="none" stroke="#444" stroke-width="1.5"/><path d="M63,10 L69,16 M69,10 L63,16" stroke="#e02a2a" stroke-width="1.8"/><path d="M78,10 H80 M82,10 H87 V16 M87,1 V6" fill="none" stroke="#444" stroke-width="1.5"/><circle cx="92" cy="11" r="3.5" fill="#39a9c6"/><path d="M105,8 L113,1 L121,8 V16 H105 Z" fill="#f2f2f2" stroke="#666" stroke-width="1.3"/><rect x="112" y="10" width="8" height="6" fill="#dff0f7" stroke="#39a9c6"/><circle cx="133" cy="11" r="3.5" fill="none" stroke="#555" stroke-width="1.4"/><circle cx="140" cy="11" r="3.5" fill="none" stroke="#555" stroke-width="1.4"/><path d="M131,7 L135,3 M138,7 L142,3" fill="none" stroke="#555" stroke-width="1.4"/><path d="M155,1 V14 M155,2 H170 V6" fill="none" stroke="#555" stroke-width="1.4" stroke-dasharray="2,1"/><circle cx="171" cy="11" r="3.5" fill="#39a9c6"/><rect x="181" y="1" width="16" height="11" fill="#b8b8b8" stroke="#a0a0a0"/><rect x="184" y="3" width="10" height="4" fill="#dedede"/><rect x="188" y="13" width="2" height="3" fill="#aaa"/></svg><svg style="position:absolute;left:537px;top:896px;" width="18" height="20" viewBox="0 0 18 20"><path d="M1,3 L7,1 L9,11 L3,14 Z" fill="#4a8fd6"/><path d="M7,1 L13,2 L14,13 L9,11 Z" fill="#e8894d"/><path d="M3,14 L9,11 L14,13 L10,18 Z" fill="#49a86b"/></svg><svg style="position:absolute;left:768px;top:902px;" width="8" height="6" viewBox="0 0 8 6"><path d="M1,1 L4,4 L7,1" fill="none" stroke="#aaa" stroke-width="1.2"/></svg><svg style="position:absolute;left:787px;top:895px;" width="17" height="20" viewBox="0 0 17 20"><circle cx="5" cy="12" r="3" fill="none" stroke="#999" stroke-width="1.3"/><path d="M1,19 Q1,15 5,15 Q9,15 9,19 Z" fill="none" stroke="#999" stroke-width="1.3"/><path d="M8,2 H16 V8 H11 L9,10 V8 H8 Z" fill="none" stroke="#999" stroke-width="1.2"/></svg><svg style="position:absolute;left:836px;top:896px;" width="19" height="18" viewBox="0 0 19 18"><rect x="1" y="1" width="16" height="16" fill="#f2f2f2" stroke="#444" stroke-width="1.5"/><rect x="1" y="1" width="16" height="3" fill="#555"/><path d="M4,7 H6 M8,7 H15 M4,10 H6 M8,10 H15 M4,13 H6 M8,13 H15" stroke="#555" stroke-width="1.3"/></svg><svg style="position:absolute;left:862px;top:896px;" width="19" height="19" viewBox="0 0 19 19"><rect x="3" y="1" width="15" height="15" fill="#f2f2f2" stroke="#999" stroke-width="1.3"/><path d="M6,5 H8 M10,5 H16 M6,8 H8 M10,8 H16 M6,11 H8 M10,11 H16" stroke="#999" stroke-width="1.2"/><path d="M1,17 H8 M6,15 L8,17 L6,19" fill="none" stroke="#999" stroke-width="1.2"/></svg><svg style="position:absolute;left:1093px;top:902px;" width="10" height="6" viewBox="0 0 10 6"><path d="M1,1 L5,5 L9,1" fill="none" stroke="#bbb" stroke-width="1.2"/></svg><svg style="position:absolute;left:1393px;top:896px;" width="180" height="20" viewBox="0 0 180 20"><ellipse cx="4" cy="4" rx="3.5" ry="2.5" fill="none" stroke="#f0a070" stroke-width="1.3"/><ellipse cx="11" cy="4" rx="3.5" ry="2.5" fill="none" stroke="#f0a070" stroke-width="1.3"/><path d="M9,9 V18 L11,16 L13,19 L14.5,18 L12.5,15 H15 Z" fill="#f4f4f4" stroke="#444"/><path d="M27,8 L33,2 H37 L31,8 Z M25,13 L31,7 H36 L30,13 Z" fill="#4c92d6"/><path d="M37,2 L42,7 M42,2 L37,7" stroke="#e02a2a" stroke-width="1.6"/><path d="M34,9 V18 L36,16 L38,19 L39.5,18 L37.5,15 H40 Z" fill="#f4f4f4" stroke="#444"/><path d="M53,2 H60 L57,6 V10 M54,2 V8 L56,10" fill="none" stroke="#666" stroke-width="1.2"/><path d="M60,9 V18 L62,16 L64,19 L65.5,18 L63.5,15 H66 Z" fill="#f4f4f4" stroke="#444"/><path d="M77,5 L83,2 V15 L77,18 Z" fill="#4c92d6"/><path d="M86,1 L92,7 M92,1 L86,7" stroke="#e02a2a" stroke-width="1.6"/><path d="M84,9 V18 L86,16 L88,19 L89.5,18 L87.5,15 H90 Z" fill="#f4f4f4" stroke="#444"/><path d="M104,2 V14 M99,8 H110" stroke="#333" stroke-width="1.4"/><path d="M104,1 L102,3.5 H106 Z M104,15 L102,12.5 H106Z M98,8 L100.5,6 V10Z" fill="#333"/><path d="M111,9 V18 L113,16 L115,19 L116.5,18 L114.5,15 H117 Z" fill="#f4f4f4" stroke="#444"/><circle cx="136" cy="10" r="7" fill="none" stroke="#c8c8c8" stroke-width="2" stroke-dasharray="2,2.5"/><path d="M153,2 H170 L163,10 V19 L160,17 V10 Z" fill="#f0f0f0" stroke="#555" stroke-width="1.4"/></svg>
<div class="t" style="left:14.0px;top:32.7px;font-size:13.00px;color:#ffffff;transform:scaleX(1.0022);transform-origin:0 0;">File</div><div class="t" style="left:60.0px;top:32.7px;font-size:13.00px;color:#444444;transform:scaleX(1.0228);transform-origin:0 0;">Architettura</div><div class="t" style="left:148.0px;top:32.7px;font-size:13.00px;color:#444444;transform:scaleX(0.9627);transform-origin:0 0;">Struttura</div><div class="t" style="left:218.0px;top:32.7px;font-size:13.00px;color:#444444;transform:scaleX(0.9780);transform-origin:0 0;">Acciaio</div><div class="t" style="left:281.0px;top:32.7px;font-size:13.00px;color:#444444;transform:scaleX(0.9865);transform-origin:0 0;">Prefabbricati</div><div class="t" style="left:375.0px;top:33.0px;font-size:12.59px;color:#444444;transform:scaleX(0.9687);transform-origin:0 0;">Sistemi</div><div class="t" style="left:436.0px;top:33.0px;font-size:12.49px;color:#444444;transform:scaleX(0.9606);transform-origin:0 0;">Inserisci</div><div class="t" style="left:501.0px;top:32.7px;font-size:13.00px;color:#444444;transform:scaleX(0.9951);transform-origin:0 0;">Annota</div><div class="t" style="left:563.0px;top:32.7px;font-size:13.00px;color:#444444;transform:scaleX(0.9564);transform-origin:0 0;">Analizza</div><div class="t" style="left:631.0px;top:32.7px;font-size:13.00px;color:#444444;transform:scaleX(0.9826);transform-origin:0 0;">Volumetrie e cantiere</div><div class="t" style="left:773.0px;top:32.7px;font-size:13.00px;color:#444444;transform:scaleX(0.9882);transform-origin:0 0;">Collabora</div><div class="t" style="left:850.0px;top:32.7px;font-size:13.00px;color:#444444;transform:scaleX(0.9417);transform-origin:0 0;">Vista</div><div class="t" style="left:898.0px;top:33.1px;font-size:12.39px;color:#444444;transform:scaleX(0.9531);transform-origin:0 0;">Gestisci</div><div class="t" style="left:961.0px;top:32.7px;font-size:13.00px;color:#444444;transform:scaleX(1.0223);transform-origin:0 0;">Moduli aggiuntivi</div><div class="t" style="left:1082.0px;top:32.7px;font-size:13.00px;color:#444444;transform:scaleX(1.0326);transform-origin:0 0;">Modifica</div><div class="t" style="left:752.0px;top:1.2px;font-size:13.00px;color:#444444;transform:scaleX(0.9573);transform-origin:0 0;">Autodesk Revit 2024 - RVT Site L3.5 - Cordolo 2024.rvt - Vista 3D: {3D}</div><div class="t" style="left:1323.0px;top:4.2px;font-size:13.00px;color:#444444;transform:scaleX(0.9948);transform-origin:0 0;">giada.capodil...</div><div class="t" style="left:7.0px;top:141.2px;font-size:13.00px;color:#444444;transform:scaleX(0.9631);transform-origin:0 0;">Seleziona</div><div class="t" style="left:310.0px;top:141.5px;font-size:12.53px;color:#444444;transform:scaleX(0.9636);transform-origin:0 0;">Costruisci</div><div class="t" style="left:596.0px;top:141.2px;font-size:13.00px;color:#444444;transform:scaleX(0.9908);transform-origin:0 0;">Distribuzione verticale</div><div class="t" style="left:784.0px;top:141.2px;font-size:13.00px;color:#444444;transform:scaleX(1.0542);transform-origin:0 0;">Modello</div><div class="t" style="left:1040.0px;top:141.2px;font-size:13.00px;color:#444444;transform:scaleX(0.9520);transform-origin:0 0;">Locale e area</div><div class="t" style="left:1348.0px;top:141.2px;font-size:13.00px;color:#444444;transform:scaleX(0.9825);transform-origin:0 0;">Apertura</div><div class="t" style="left:1466.0px;top:141.2px;font-size:13.00px;color:#444444;transform:scaleX(0.9929);transform-origin:0 0;">Riferimento</div><div class="t" style="left:1547.0px;top:141.2px;font-size:13.00px;color:#444444;transform:scaleX(0.9884);transform-origin:0 0;">Piano di lavoro</div><div class="t" style="left:17.0px;top:99.2px;font-size:13.00px;color:#444444;transform:scaleX(1.0119);transform-origin:0 0;">Modifica</div><div class="t" style="left:96.0px;top:99.2px;font-size:13.00px;color:#444444;transform:scaleX(1.0127);transform-origin:0 0;">Muro</div><div class="t" style="left:143.0px;top:98.5px;font-size:12.56px;color:#444444;transform:scaleX(0.9660);transform-origin:0 0;">Porta</div><div class="t" style="left:1290.0px;top:98.2px;font-size:13.00px;color:#444444;transform:scaleX(0.9605);transform-origin:0 0;">Perpendicolare</div><div class="t" style="left:1381.0px;top:98.7px;font-size:13.00px;color:#444444;transform:scaleX(0.9643);transform-origin:0 0;">Cavedio</div><div class="t" style="left:1553.0px;top:99.2px;font-size:13.00px;color:#444444;transform:scaleX(0.9730);transform-origin:0 0;">Imposta</div><div class="t" style="left:205.0px;top:60.5px;font-size:12.44px;color:#444444;transform:scaleX(0.9568);transform-origin:0 0;">Finestra</div><div class="t" style="left:206.0px;top:88.2px;font-size:13.00px;color:#444444;transform:scaleX(0.9805);transform-origin:0 0;">Componente</div><div class="t" style="left:205.0px;top:116.2px;font-size:13.00px;color:#444444;transform:scaleX(0.9497);transform-origin:0 0;">Colonna</div><div class="t" style="left:326.0px;top:60.2px;font-size:13.00px;color:#444444;transform:scaleX(1.0288);transform-origin:0 0;">Tetto</div><div class="t" style="left:325.0px;top:88.2px;font-size:13.00px;color:#444444;transform:scaleX(1.0377);transform-origin:0 0;">Controsoffitto</div><div class="t" style="left:325.0px;top:116.2px;font-size:13.00px;color:#444444;transform:scaleX(0.9606);transform-origin:0 0;">Pavimento</div><div class="t" style="left:437.5px;top:60.2px;font-size:13.00px;color:#444444;transform:scaleX(0.9687);transform-origin:0 0;">Sistema facciata continua</div><div class="t" style="left:437.5px;top:88.2px;font-size:13.00px;color:#444444;transform:scaleX(0.9838);transform-origin:0 0;">Griglia facciata continua</div><div class="t" style="left:438.0px;top:116.2px;font-size:13.00px;color:#444444;transform:scaleX(1.0147);transform-origin:0 0;">Montante</div><div class="t" style="left:624.0px;top:60.2px;font-size:13.00px;color:#444444;transform:scaleX(0.9702);transform-origin:0 0;">Ringhiera</div><div class="t" style="left:624.0px;top:88.2px;font-size:13.00px;color:#444444;transform:scaleX(0.9762);transform-origin:0 0;">Rampa inclinata</div><div class="t" style="left:624.0px;top:116.5px;font-size:12.48px;color:#444444;transform:scaleX(0.9603);transform-origin:0 0;">Scala</div><div class="t" style="left:758.0px;top:60.2px;font-size:13.00px;color:#444444;transform:scaleX(0.9973);transform-origin:0 0;">Testo modello</div><div class="t" style="left:758.0px;top:88.2px;font-size:13.00px;color:#444444;transform:scaleX(1.0139);transform-origin:0 0;">Linea di modello</div><div class="t" style="left:757.0px;top:116.2px;font-size:13.00px;color:#444444;transform:scaleX(1.0260);transform-origin:0 0;">Gruppo di modello</div><div class="t" style="left:917.0px;top:88.2px;font-size:13.00px;color:#444444;transform:scaleX(1.0131);transform-origin:0 0;">Delimitatore  locale</div><div class="t" style="left:916.0px;top:116.2px;font-size:13.00px;color:#444444;transform:scaleX(0.9730);transform-origin:0 0;">Assegna etichetta  al locale</div><div class="t" style="left:1117.0px;top:60.6px;font-size:12.40px;color:#444444;transform:scaleX(0.9540);transform-origin:0 0;">Area</div><div class="t" style="left:1117.0px;top:116.2px;font-size:13.00px;color:#444444;transform:scaleX(0.9666);transform-origin:0 0;">Assegna etichetta  all'area</div><div class="t" style="left:916.0px;top:60.5px;font-size:12.60px;color:#c4c4c4;transform:scaleX(0.9694);transform-origin:0 0;">Locale</div><div class="t" style="left:1117.0px;top:88.2px;font-size:13.00px;color:#c4c4c4;transform:scaleX(0.9569);transform-origin:0 0;">Contorno  area</div><div class="t" style="left:4.0px;top:193.2px;font-size:13.00px;color:#444444;transform:scaleX(0.9668);transform-origin:0 0;">Proprietà</div><div class="t" style="left:80.0px;top:243.2px;font-size:13.00px;color:#444444;transform:scaleX(0.9406);transform-origin:0 0;">Vista 3D</div><div class="t" style="left:5.0px;top:295.2px;font-size:13.00px;color:#444444;transform:scaleX(0.9457);transform-origin:0 0;">Vista 3D: {3D}</div><div class="t" style="left:148.0px;top:295.2px;font-size:13.00px;color:#444444;transform:scaleX(1.0550);transform-origin:0 0;">Modifica tipo</div><div class="t" style="left:4.0px;top:323.7px;font-size:13.00px;color:#444444;">Grafica</div><div class="t" style="left:4.0px;top:581.7px;font-size:13.00px;color:#444444;">Estensioni</div><div class="t" style="left:4.0px;top:754.2px;font-size:13.00px;color:#444444;">Cinepresa</div><div class="t" style="left:10.5px;top:345.1px;font-size:12.50px;color:#444444;transform:scaleX(0.9687);transform-origin:0 0;">Scala vista</div><div class="t" style="left:106.0px;top:344.8px;font-size:13.00px;color:#2a2a2a;transform:scaleX(0.9430);transform-origin:0 0;">1 : 100</div><div class="t" style="left:10.5px;top:366.6px;font-size:12.28px;color:#a8a8a8;transform:scaleX(0.9523);transform-origin:0 0;">Scala  1:</div><div class="t" style="left:103.5px;top:366.5px;font-size:12.44px;color:#a8a8a8;transform:scaleX(0.9641);transform-origin:0 0;">100</div><div class="t" style="left:10.5px;top:387.8px;font-size:12.90px;color:#444444;transform:scaleX(0.9895);transform-origin:0 0;">Livello di dett...</div><div class="t" style="left:103.5px;top:387.8px;font-size:12.90px;color:#444444;transform:scaleX(1.0254);transform-origin:0 0;">Medio</div><div class="t" style="left:10.5px;top:409.3px;font-size:12.90px;color:#444444;transform:scaleX(0.9819);transform-origin:0 0;">Visibilità strati...</div><div class="t" style="left:103.5px;top:409.3px;font-size:12.90px;color:#444444;transform:scaleX(1.0118);transform-origin:0 0;">Mostra originale</div><div class="t" style="left:10.5px;top:430.8px;font-size:12.90px;color:#444444;transform:scaleX(0.9546);transform-origin:0 0;">Sostituzioni vi...</div><div class="t" style="left:122.0px;top:430.7px;font-size:13.00px;color:#444444;transform:scaleX(0.9789);transform-origin:0 0;">Modifica...</div><div class="t" style="left:10.5px;top:452.3px;font-size:12.90px;color:#444444;transform:scaleX(0.9668);transform-origin:0 0;">Opzioni di vis...</div><div class="t" style="left:122.0px;top:452.2px;font-size:13.00px;color:#444444;transform:scaleX(0.9789);transform-origin:0 0;">Modifica...</div><div class="t" style="left:10.5px;top:474.0px;font-size:12.90px;color:#444444;transform:scaleX(0.9951);transform-origin:0 0;">Disciplina</div><div class="t" style="left:103.5px;top:474.0px;font-size:12.90px;color:#444444;transform:scaleX(0.9995);transform-origin:0 0;">Coordinamento</div><div class="t" style="left:10.5px;top:495.3px;font-size:12.90px;color:#444444;transform:scaleX(0.9540);transform-origin:0 0;">Mostra linee n...</div><div class="t" style="left:103.5px;top:495.3px;font-size:12.90px;color:#444444;transform:scaleX(0.9717);transform-origin:0 0;">Per disciplina</div><div class="t" style="left:10.5px;top:517.6px;font-size:12.43px;color:#444444;transform:scaleX(0.9637);transform-origin:0 0;">Stile visualizza...</div><div class="t" style="left:103.5px;top:517.5px;font-size:12.46px;color:#444444;transform:scaleX(0.9661);transform-origin:0 0;">Nessuno</div><div class="t" style="left:10.5px;top:538.8px;font-size:12.90px;color:#444444;transform:scaleX(1.0145);transform-origin:0 0;">Mostra griglie</div><div class="t" style="left:122.0px;top:538.7px;font-size:13.00px;color:#444444;transform:scaleX(0.9789);transform-origin:0 0;">Modifica...</div><div class="t" style="left:10.5px;top:560.6px;font-size:12.36px;color:#444444;transform:scaleX(0.9581);transform-origin:0 0;">Percorso del s...</div><div class="t" style="left:10.5px;top:603.3px;font-size:12.90px;color:#444444;transform:scaleX(0.9784);transform-origin:0 0;">Ritaglia vista</div><div class="t" style="left:10.5px;top:624.8px;font-size:12.90px;color:#444444;transform:scaleX(0.9594);transform-origin:0 0;">Regione di ta...</div><div class="t" style="left:10.5px;top:646.3px;font-size:12.90px;color:#444444;transform:scaleX(0.9790);transform-origin:0 0;">Taglio annota...</div><div class="t" style="left:10.5px;top:667.8px;font-size:12.90px;color:#444444;transform:scaleX(0.9758);transform-origin:0 0;">Ritaglio orizz...</div><div class="t" style="left:10.5px;top:689.3px;font-size:12.90px;color:#a8a8a8;transform:scaleX(0.9762);transform-origin:0 0;">Offset del rita...</div><div class="t" style="left:103.5px;top:689.6px;font-size:12.40px;color:#a8a8a8;transform:scaleX(0.9614);transform-origin:0 0;">304.8000</div><div class="t" style="left:10.5px;top:710.8px;font-size:12.90px;color:#444444;transform:scaleX(0.9734);transform-origin:0 0;">Riquadro di d...</div><div class="t" style="left:103.5px;top:711.0px;font-size:12.46px;color:#444444;transform:scaleX(0.9661);transform-origin:0 0;">Nessuno</div><div class="t" style="left:10.5px;top:732.3px;font-size:12.90px;color:#444444;transform:scaleX(0.9438);transform-origin:0 0;">Riquadro di se...</div><div class="t" style="left:10.5px;top:776.3px;font-size:12.90px;color:#444444;transform:scaleX(0.9700);transform-origin:0 0;">Impostazioni ...</div><div class="t" style="left:122.0px;top:776.2px;font-size:13.00px;color:#444444;transform:scaleX(0.9789);transform-origin:0 0;">Modifica...</div><div class="t" style="left:10.5px;top:797.8px;font-size:12.90px;color:#a8a8a8;transform:scaleX(0.9617);transform-origin:0 0;">Orientamento ...</div><div class="t" style="left:10.5px;top:818.8px;font-size:12.90px;color:#444444;transform:scaleX(1.0100);transform-origin:0 0;">Modalità di pr...</div><div class="t" style="left:103.5px;top:818.8px;font-size:12.90px;color:#444444;transform:scaleX(1.0113);transform-origin:0 0;">Ortogonale</div><div class="t" style="left:10.5px;top:840.3px;font-size:12.90px;color:#444444;transform:scaleX(0.9626);transform-origin:0 0;">Altezza del pu...</div><div class="t" style="left:103.5px;top:840.6px;font-size:12.39px;color:#444444;transform:scaleX(0.9605);transform-origin:0 0;">18.8962</div><div class="t" style="left:2.0px;top:866.2px;font-size:13.00px;color:#3a77b5;transform:scaleX(1.0047);transform-origin:0 0;text-decoration:underline">Guida alle proprietà</div><div class="t" style="left:172.0px;top:869.2px;font-size:13.00px;color:#b0b0b0;transform:scaleX(1.0084);transform-origin:0 0;">Applica</div><div class="t" style="left:1432.0px;top:193.2px;font-size:13.00px;color:#444444;transform:scaleX(0.9620);transform-origin:0 0;">Browser di progetto - RVT Site L...</div><div class="t" style="left:1474.0px;top:224.6px;font-size:12.29px;color:#b4b4b4;transform:scaleX(0.9454);transform-origin:0 0;">Cerca</div><div class="t" style="left:1475.0px;top:258.7px;font-size:13.00px;color:#444444;transform:scaleX(0.9965);transform-origin:0 0;">Viste (tutto)</div><div class="t" style="left:1471.0px;top:281.2px;font-size:13.00px;color:#444444;">Piante dei pavimenti (Piante d</div><div class="t" style="left:1509.0px;top:303.7px;font-size:13.00px;color:#444444;transform:scaleX(0.9526);transform-origin:0 0;">0 - Piano Terra</div><div class="t" style="left:1509.0px;top:326.2px;font-size:13.00px;color:#444444;transform:scaleX(0.9710);transform-origin:0 0;">1 - Piano Primo</div><div class="t" style="left:1509.0px;top:348.7px;font-size:13.00px;color:#444444;transform:scaleX(0.9564);transform-origin:0 0;">Cantiere</div><div class="t" style="left:1471.0px;top:371.2px;font-size:13.00px;color:#444444;">Piante dei controsoffitti (Pian</div><div class="t" style="left:1471.0px;top:393.2px;font-size:13.00px;color:#444444;transform:scaleX(0.9406);transform-origin:0 0;">Viste 3D</div><div class="t" style="left:1471.0px;top:415.7px;font-size:13.00px;color:#444444;transform:scaleX(0.9744);transform-origin:0 0;">Prospetti</div><div class="t" style="left:1471.0px;top:438.5px;font-size:12.55px;color:#444444;transform:scaleX(0.9651);transform-origin:0 0;">Sezioni (Sezione 1)</div><div class="t" style="left:1509.0px;top:461.0px;font-size:12.45px;color:#444444;transform:scaleX(0.9573);transform-origin:0 0;">Sezione 1</div><div class="t" style="left:1475.0px;top:483.2px;font-size:13.00px;color:#444444;transform:scaleX(0.9481);transform-origin:0 0;">Legende</div><div class="t" style="left:1475.0px;top:505.7px;font-size:13.00px;color:#444444;transform:scaleX(1.0071);transform-origin:0 0;">Abachi/Quantità (tutto)</div><div class="t" style="left:1475.0px;top:528.2px;font-size:13.00px;color:#444444;transform:scaleX(0.9713);transform-origin:0 0;">Tavole (tutto)</div><div class="t" style="left:1475.0px;top:550.5px;font-size:12.58px;color:#444444;transform:scaleX(0.9677);transform-origin:0 0;">Famiglie</div><div class="t" style="left:1475.0px;top:573.2px;font-size:13.00px;color:#444444;transform:scaleX(0.9992);transform-origin:0 0;">Gruppi</div><div class="t" style="left:1475.0px;top:595.7px;font-size:13.00px;color:#444444;transform:scaleX(0.9715);transform-origin:0 0;">Collegamenti Revit</div><div class="t" style="left:267.0px;top:195.5px;font-size:12.57px;color:#333333;transform:scaleX(0.9667);transform-origin:0 0;font-weight:bold">{3D}</div><div class="t" style="left:403.0px;top:195.5px;font-size:12.56px;color:#444444;transform:scaleX(0.9663);transform-origin:0 0;">Sezione 1</div><div class="t" style="left:540.0px;top:195.5px;font-size:12.58px;color:#444444;transform:scaleX(0.9675);transform-origin:0 0;">Cantiere</div><div class="t" style="left:261.0px;top:872.8px;font-size:12.00px;color:#333333;transform:scaleX(0.9536);transform-origin:0 0;">1 : 100</div><div class="t" style="left:2.0px;top:900.2px;font-size:13.00px;color:#444444;transform:scaleX(0.9530);transform-origin:0 0;">Fare clic per selezionare, premere TAB per alternare, CTRL per aggiungere e MAIUSC per desel</div><div class="t" style="left:889.0px;top:900.2px;font-size:13.00px;color:#b0b0b0;transform:scaleX(1.0403);transform-origin:0 0;">Modello principale</div><div class="t" style="left:803.0px;top:901.5px;font-size:10.72px;color:#999;transform:scaleX(0.8937);transform-origin:0 0;">:0</div><div class="t" style="left:1565.0px;top:899.9px;font-size:11.84px;color:#555;transform:scaleX(0.9110);transform-origin:0 0;">:0</div>
</body></html>
